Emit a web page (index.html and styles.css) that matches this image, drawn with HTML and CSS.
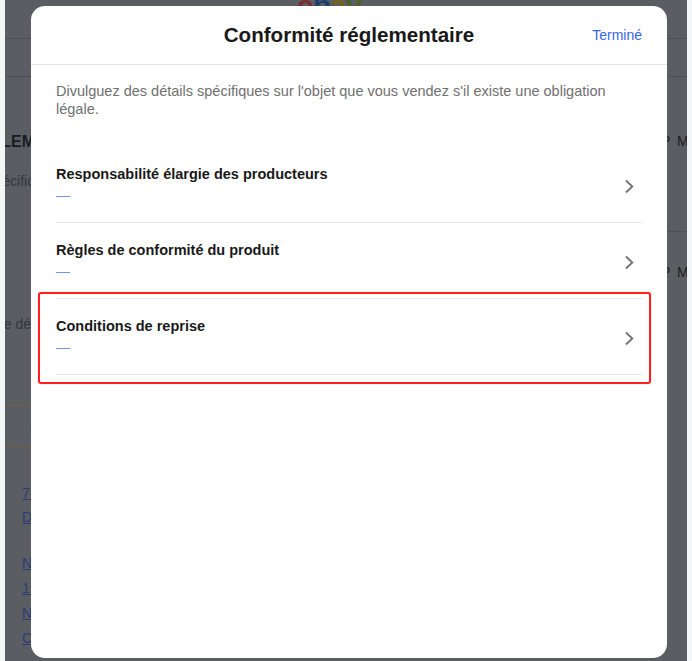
FILE: index.html
```html
<!DOCTYPE html>
<html lang="fr">
<head>
    <meta charset="UTF-8">
    <meta name="viewport" content="width=device-width, initial-scale=1.0">
    <title>Conformité réglementaire</title>
    <link rel="stylesheet" href="styles.css">
</head>
<body>
    <div class="frame">
        <!-- page assombrie derrière la fenêtre -->
        <div class="page">
            <header class="page-header">
                <span class="logo"><span class="l-e">e</span><span class="l-b">b</span><span class="l-a">a</span><span class="l-y">y</span></span>
            </header>
            <nav class="page-nav"></nav>
            <div class="page-body">
                <div class="side-left">
                    <div class="edge-text strong">PROBLEM</div>
                    <div class="edge-text muted spec">spécifiq</div>
                    <div class="edge-text muted desc">de dét</div>
                    <div class="filters"><span>·</span></div>
                    <div class="links first">
                        <a href="#">7 jours</a>
                        <a href="#">Détails</a>
                    </div>
                    <div class="links second">
                        <a href="#">Numéro</a>
                        <a href="#">1 article</a>
                        <a href="#">Nouveau</a>
                        <a href="#">Conditions</a>
                    </div>
                </div>
                <div class="side-right">
                    <div class="cut-text top">P Marque</div>
                    <div class="side-rule"></div>
                    <div class="cut-text bottom">P Marque</div>
                </div>
            </div>
        </div>

        <div class="modal">
            <div class="modal-header">
                <h2 class="modal-title">Conformité réglementaire</h2>
                <button class="done-btn">Terminé</button>
            </div>
            <div class="modal-body">
                <p class="intro">Divulguez des détails spécifiques sur l'objet que vous vendez s'il existe une obligation légale.</p>
                <ul class="rows">
                    <li class="row">
                        <div class="row-text">
                            <div class="row-title">Responsabilité élargie des producteurs</div>
                            <div class="row-value">—</div>
                        </div>
                        <svg class="chevron" width="10" height="15" viewBox="0 0 10 15"><path d="M2 1.5 L8.3 7.5 L2 13.5" fill="none" stroke="#707070" stroke-width="1.8"/></svg>
                    </li>
                    <li class="row">
                        <div class="row-text">
                            <div class="row-title">Règles de conformité du produit</div>
                            <div class="row-value">—</div>
                        </div>
                        <svg class="chevron" width="10" height="15" viewBox="0 0 10 15"><path d="M2 1.5 L8.3 7.5 L2 13.5" fill="none" stroke="#707070" stroke-width="1.8"/></svg>
                    </li>
                    <li class="row marked">
                        <div class="row-text">
                            <div class="row-title">Conditions de reprise</div>
                            <div class="row-value">—</div>
                        </div>
                        <svg class="chevron" width="10" height="15" viewBox="0 0 10 15"><path d="M2 1.5 L8.3 7.5 L2 13.5" fill="none" stroke="#707070" stroke-width="1.8"/></svg>
                        <span class="mark-box"></span>
                    </li>
                </ul>
            </div>
        </div>
    </div>
</body>
</html>
```

FILE: styles.css
```css
* {
    box-sizing: border-box;
}

body {
    margin: 0 5px;
    background: #f4f5f7;
    font-family: "Liberation Sans", Arial, sans-serif;
    color: #191919;
}

/* fond assombri de la page */
.frame {
    position: relative;
    height: 661px;
    overflow: hidden;
    background: #5a5e62;
    box-shadow: inset 0 0 0 800px #5a5e62;
}

.page-header {
    display: flex;
    height: 39px;
    padding-left: 292px;
    border-bottom: 1px solid #4c5054;
}

.logo {
    display: block;
    margin-top: -9px;
    font-size: 30px;
    line-height: 30px;
    font-weight: bold;
    letter-spacing: -1px;
}

.l-e { color: #7a2c30; }
.l-b { color: #1d3f70; }
.l-a { color: #76601c; }
.l-y { color: #4c6228; }

.page-nav {
    height: 38px;
    border-bottom: 1px solid #4c5054;
}

.page-body {
    display: flex;
    justify-content: space-between;
}

.side-left {
    width: 30px;
    font-size: 14px;
}

.edge-text {
    display: flex;
    justify-content: flex-end;
    white-space: nowrap;
    line-height: 18px;
}

.edge-text.strong {
    margin-top: 55px;
    font-size: 16px;
    line-height: 20px;
    font-weight: bold;
    color: #1a1c1f;
}

.edge-text.muted { color: #33373b; }
.edge-text.spec { margin-top: 20px; }
.edge-text.desc { margin-top: 125px; }

.filters {
    margin-top: 72px;
    height: 42px;
    padding: 10px 0 0 24px;
    border-top: 1px solid #6e5f44;
    border-bottom: 1px solid #6e5f44;
    color: #33373b;
    line-height: 18px;
}

.links {
    display: flex;
    flex-direction: column;
    padding-left: 17px;
    white-space: nowrap;
}

.links a {
    color: #2c3b78;
    line-height: 24px;
}

.links.first { margin-top: 34px; }
.links.second { margin-top: 22px; }
.links.second a { line-height: 25px; }

.side-right {
    width: 20px;
    font-size: 14px;
    white-space: nowrap;
}

.cut-text {
    margin-left: -6px;
    line-height: 20px;
    word-spacing: 3px;
    color: #1a1c1f;
}

.cut-text.top { margin-top: 54px; }
.cut-text.bottom { margin-top: 30px; }

.side-rule {
    margin-top: 80px;
    border-top: 1px solid #4c5054;
}

/* fenetre */
.modal {
    position: absolute;
    top: 6px;
    left: 26px;
    width: 636px;
    height: 652px;
    background: #fff;
    border-radius: 14px;
}

.modal-header {
    display: grid;
    grid-template-columns: 1fr auto 1fr;
    align-items: center;
    height: 59px;
    padding: 0 25px;
    border-bottom: 1px solid #e5e5e5;
}

.modal-title {
    grid-column: 2;
    margin: 0;
    font-size: 20.6px;
    font-weight: bold;
    color: #191919;
}

.done-btn {
    justify-self: end;
    padding: 0;
    border: none;
    background: none;
    font-family: inherit;
    font-size: 14px;
    color: #3665f3;
    cursor: pointer;
}

.modal-body {
    padding: 17px 25px 0;
}

.intro {
    max-width: 560px;
    margin: 0 0 29px;
    font-size: 14.5px;
    line-height: 18px;
    color: #707070;
}

.rows {
    margin: 0;
    padding: 0;
    list-style: none;
}

.row {
    display: flex;
    align-items: center;
    justify-content: space-between;
    padding: 18px 8px 18px 0;
    border-bottom: 1px solid #e5e5e5;
}

.row-title {
    font-size: 14.5px;
    line-height: 18px;
    font-weight: bold;
}

.row-value {
    margin-top: 3px;
    font-size: 14px;
    line-height: 18px;
    color: #6f90f5;
}

.chevron {
    margin-top: 4px;
}

.row.marked {
    position: relative;
}

.mark-box {
    position: absolute;
    top: -7px;
    left: -18px;
    right: -9px;
    bottom: -10px;
    border: 2px solid #ff1f1f;
    border-radius: 3px;
    box-shadow: 0 0 1px rgba(255, 0, 0, 0.5);
    pointer-events: none;
}
```
